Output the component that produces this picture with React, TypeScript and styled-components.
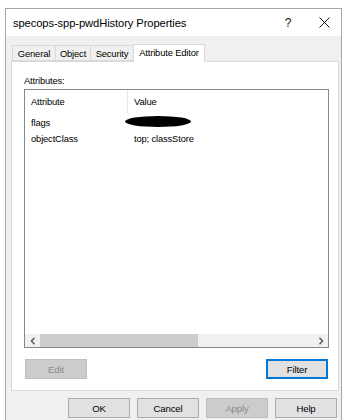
import React from "react";
import styled, { createGlobalStyle } from "styled-components";

const Global = createGlobalStyle`
  html, body { margin: 0; padding: 0; background: #ffffff; }
  body { font-family: "Liberation Sans", Arial, sans-serif; }
`;

const Page = styled.div`
  width: 349px;
  height: 420px;
  overflow: hidden;
  padding: 8px 0 0 5px;
  box-sizing: border-box;
`;

const Window = styled.div`
  width: 337px;
  height: 430px;
  box-sizing: border-box;
  border: 1px solid #a8a8a8;
  background: #f0f0f0;
  display: flex;
  flex-direction: column;
`;

const TitleBar = styled.div`
  height: 27px;
  background: #ffffff;
  display: flex;
  align-items: center;
  padding-left: 7px;
  flex-shrink: 0;
`;

const Title = styled.div`
  flex: 1;
  font-size: 11.2px;
  color: #000;
  letter-spacing: -0.1px;
`;

const TitleButton = styled.div<{ $w: number }>`
  width: ${(p) => p.$w}px;
  height: 27px;
  display: flex;
  align-items: center;
  justify-content: center;
  color: #111;
  font-size: 12px;
`;

const Body = styled.div`
  padding: 8px 2px 0 5px;
  display: flex;
  flex-direction: column;
`;

const TabStrip = styled.div`
  display: flex;
  align-items: flex-end;
  height: 17px;
  padding-left: 2px;
`;

const Tab = styled.div<{ $active?: boolean; $w: number }>`
  width: ${(p) => p.$w}px;
  flex-shrink: 0;
  height: ${(p) => (p.$active ? 18 : 16)}px;
  box-sizing: border-box;
  border: 1px solid #d9d9d9;
  border-bottom: ${(p) => (p.$active ? "none" : "1px solid #d9d9d9")};
  margin-left: -1px;
  background: ${(p) => (p.$active ? "#ffffff" : "#f0f0f0")};
  font-size: 9.4px;
  letter-spacing: -0.15px;
  color: #000;
  display: flex;
  align-items: ${(p) => (p.$active ? "flex-start" : "center")};
  padding-top: ${(p) => (p.$active ? "2px" : "0")};
  justify-content: center;
  position: relative;
  z-index: ${(p) => (p.$active ? 1 : 0)};
  margin-bottom: ${(p) => (p.$active ? "-1px" : "0")};
`;

const Panel = styled.div`
  width: 328px;
  height: 330px;
  box-sizing: border-box;
  background: #ffffff;
  border: 1px solid #d9d9d9;
  padding: 11px 9px 0 12px;
  display: flex;
  flex-direction: column;
`;

const Label = styled.div`
  font-size: 9.4px;
  letter-spacing: -0.15px;
  color: #000;
  height: 16px;
  line-height: 16px;
`;

const ListBox = styled.div`
  width: 305px;
  height: 259px;
  box-sizing: border-box;
  border: 1px solid #828790;
  display: flex;
  flex-direction: column;
  background: #fff;
`;

const HeaderRow = styled.div`
  display: flex;
  height: 23px;
  align-items: stretch;
`;

const HeaderCell = styled.div<{ $w?: number; $divider?: boolean }>`
  ${(p) => (p.$w ? `width: ${p.$w}px;` : "flex: 1;")}
  box-sizing: border-box;
  padding-left: 6px;
  font-size: 9.4px;
  letter-spacing: -0.15px;
  display: flex;
  align-items: center;
  border-right: ${(p) => (p.$divider ? "1px solid #e5e5e5" : "none")};
`;

const Rows = styled.div`
  flex: 1;
  padding-top: 1px;
`;

const Row = styled.div`
  display: flex;
  height: 16px;
  align-items: center;
  font-size: 9.4px;
  letter-spacing: -0.15px;
  color: #000;
`;

const Cell = styled.div<{ $w?: number }>`
  ${(p) => (p.$w ? `width: ${p.$w}px;` : "flex: 1;")}
  padding-left: 6px;
  box-sizing: border-box;
  display: flex;
  align-items: center;
`;

const Redaction = styled.span`
  display: inline-block;
  width: 66px;
  height: 11px;
  background: #000;
  border-radius: 50% / 50%;
  margin-left: -9px;
  margin-top: -1px;
`;

const ScrollBar = styled.div`
  height: 13px;
  display: flex;
  align-items: stretch;
  background: #f0f0f0;
`;

const ScrollArrow = styled.div`
  width: 15px;
  display: flex;
  align-items: center;
  justify-content: center;
`;

const ScrollTrack = styled.div`
  flex: 1;
  display: flex;
  align-items: stretch;
`;

const ScrollThumb = styled.div`
  width: 158px;
  background: #cdcdcd;
`;

const ActionRow = styled.div`
  display: flex;
  justify-content: space-between;
  margin-top: 11px;
  width: 303px;
  padding-left: 1px;
`;

const Button = styled.div<{ $disabled?: boolean; $focused?: boolean }>`
  width: 62px;
  height: 20px;
  box-sizing: border-box;
  display: flex;
  align-items: center;
  justify-content: center;
  font-size: 9.6px;
  letter-spacing: -0.15px;
  background: ${(p) => (p.$disabled ? "#cccccc" : "#e1e1e1")};
  color: ${(p) => (p.$disabled ? "#8a8a8a" : "#000")};
  border: 1px solid
    ${(p) => (p.$focused ? "#0078d7" : p.$disabled ? "#bfbfbf" : "#adadad")};
  box-shadow: ${(p) => (p.$focused ? "inset 0 0 0 1px #0078d7" : "none")};
`;

const Footer = styled.div`
  display: flex;
  gap: 7px;
  justify-content: flex-end;
  padding: 7px 2px 0 0;
`;

const Chevron = ({ dir }: { dir: "left" | "right" }) => (
  <svg width="6" height="8" viewBox="0 0 6 8">
    <path
      d={dir === "left" ? "M4.5 0.8 L1.5 4 L4.5 7.2" : "M1.5 0.8 L4.5 4 L1.5 7.2"}
      fill="none"
      stroke="#606060"
      strokeWidth="1.6"
    />
  </svg>
);

const CloseIcon = () => (
  <svg width="11" height="11" viewBox="0 0 11 11">
    <path d="M0.5 0.5 L10.5 10.5 M10.5 0.5 L0.5 10.5" stroke="#111" strokeWidth="1" />
  </svg>
);

export default function App() {
  return (
    <>
      <Global />
      <Page>
        <Window>
          <TitleBar>
            <Title>specops-spp-pwdHistory Properties</Title>
            <TitleButton $w={38}>?</TitleButton>
            <TitleButton $w={34}>
              <CloseIcon />
            </TitleButton>
          </TitleBar>
          <Body>
            <TabStrip>
              <Tab $w={44}>General</Tab>
              <Tab $w={36}>Object</Tab>
              <Tab $w={44}>Security</Tab>
              <Tab $w={72} $active>
                Attribute Editor
              </Tab>
            </TabStrip>
            <Panel>
              <Label>Attributes:</Label>
              <ListBox>
                <HeaderRow>
                  <HeaderCell $w={103} $divider>
                    Attribute
                  </HeaderCell>
                  <HeaderCell>Value</HeaderCell>
                </HeaderRow>
                <Rows>
                  <Row>
                    <Cell $w={103}>flags</Cell>
                    <Cell>
                      <Redaction />
                    </Cell>
                  </Row>
                  <Row>
                    <Cell $w={103}>objectClass</Cell>
                    <Cell>top; classStore</Cell>
                  </Row>
                </Rows>
                <ScrollBar>
                  <ScrollArrow>
                    <Chevron dir="left" />
                  </ScrollArrow>
                  <ScrollTrack>
                    <ScrollThumb />
                  </ScrollTrack>
                  <ScrollArrow>
                    <Chevron dir="right" />
                  </ScrollArrow>
                </ScrollBar>
              </ListBox>
              <ActionRow>
                <Button $disabled>Edit</Button>
                <Button $focused>Filter</Button>
              </ActionRow>
            </Panel>
            <Footer>
              <Button>OK</Button>
              <Button>Cancel</Button>
              <Button $disabled>Apply</Button>
              <Button>Help</Button>
            </Footer>
          </Body>
        </Window>
      </Page>
    </>
  );
}
